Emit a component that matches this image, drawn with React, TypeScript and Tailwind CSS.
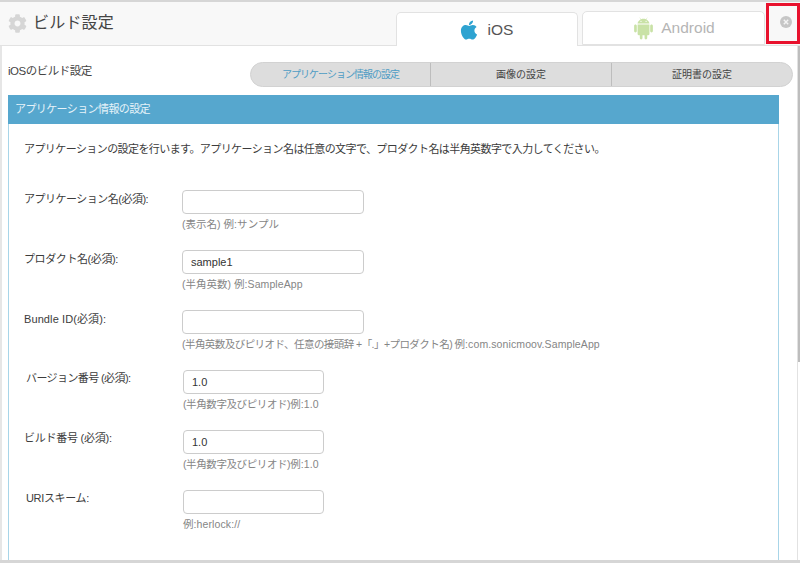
import { AiFillAndroid } from "react-icons/ai";
import { FaApple, FaCog } from "react-icons/fa";

type Field = {
  label: string;
  value?: string;
  hint: string;
  example: string;
  short?: boolean;
  labelClass: string;
  hintClass?: string;
};

const fields: Field[] = [
  {
    label: "アプリケーション名(必須):",
    hint: "(表示名) ",
    example: "例:サンプル",
    labelClass: "pt-[1px] tracking-[-0.5px]",
  },
  {
    label: "プロダクト名(必須):",
    value: "sample1",
    hint: "(半角英数) ",
    example: "例:SampleApp",
    labelClass: "pt-[1px] tracking-[-0.4px]",
  },
  {
    label: "Bundle ID(必須):",
    hint: "(半角英数及びピリオド、任意の接頭辞 +「.」+プロダクト名) ",
    example: "例:com.sonicmoov.SampleApp",
    labelClass: "pt-[1px] tracking-[0.1px]",
    hintClass: "tracking-[-0.55px]",
  },
  {
    label: "バージョン番号 (必須):",
    value: "1.0",
    hint: "(半角数字及びピリオド)",
    example: "例:1.0",
    short: true,
    labelClass: "pl-[2px] tracking-[-0.6px]",
    hintClass: "tracking-[-0.4px]",
  },
  {
    label: "ビルド番号 (必須):",
    value: "1.0",
    hint: "(半角数字及びピリオド)",
    example: "例:1.0",
    short: true,
    labelClass: "tracking-[-0.25px]",
    hintClass: "tracking-[-0.4px]",
  },
  {
    label: "URIスキーム:",
    hint: "",
    example: "例:herlock://",
    short: true,
    labelClass: "pl-[2px] tracking-[-0.35px]",
  },
];

function FieldRow({ field }: { field: Field }) {
  return (
    <div className="flex h-[60px]">
      <label className={`w-[158px] shrink-0 text-[11px] leading-[16px] whitespace-nowrap text-[#3c3c3c] ${field.labelClass}`}>
        {field.label}
      </label>
      <div className={field.short ? "pl-px" : ""}>
        <input
          readOnly
          value={field.value ?? ""}
          className={`block h-[24px] rounded-[4px] border border-[#cccccc] bg-white px-[8px] text-[11px] text-[#333333] outline-none ${
            field.short ? "w-[141px]" : "w-[182px]"
          }`}
        />
        <p className="mt-[3px] whitespace-nowrap text-[10.5px] leading-[14px] text-[#858585]">
          <span className={field.hintClass}>{field.hint}</span>
          <span className="tracking-[0.1px]">{field.example}</span>
        </p>
      </div>
    </div>
  );
}

export default function App() {
  return (
    <div
      className="flex h-[563px] w-[800px] flex-col overflow-hidden border-t-2 border-b-[3px] border-[#d6d6d6] bg-white"
      style={{ fontFamily: '"Liberation Sans", "Noto Sans CJK JP", sans-serif' }}
    >
      {/* header with platform tabs */}
      <header className="flex h-[44px] shrink-0 items-end border-b border-[#e2e2e2] bg-[#f8f8f8] pl-[8px]">
        <div className="flex h-full flex-1 items-center gap-[6px] pb-[1px]">
          <FaCog className="h-[19px] w-[19px] text-[#d6d6d6]" />
          <h1 className="text-[16px] font-normal tracking-[0.2px] text-[#444444]">ビルド設定</h1>
        </div>
        <div className="-mb-px flex h-[34px] w-[182px] items-center justify-center gap-[8px] rounded-t-[5px] border border-b-0 border-[#e2e2e2] bg-white pr-[3px]">
          <FaApple className="h-[22px] w-[22px] text-[#2ea3d1]" />
          <span className="text-[15.5px] text-[#555555]">iOS</span>
        </div>
        <div className="ml-[4px] flex h-[34px] w-[183px] items-center justify-center gap-[5px] rounded-t-[5px] border border-[#e2e2e2] bg-white pr-[1px]">
          <AiFillAndroid className="h-[25px] w-[25px] text-[#c9e2a6]" />
          <span className="text-[15.5px] text-[#b5b5b5]">Android</span>
        </div>
        <div className="mb-px ml-px flex h-[41px] w-[34px] shrink-0 items-start justify-center border-[3px] border-[#e8112d] pt-[10px]">
          <svg viewBox="0 0 12 12" className="ml-[6px] h-[12px] w-[12px]">
            <circle cx="6" cy="6" r="6" fill="#c6c6c6" />
            <path d="M3.8 3.8l4.4 4.4M8.2 3.8L3.8 8.2" stroke="#f4f4f4" strokeWidth="1.4" />
          </svg>
        </div>
      </header>

      <div className="flex min-h-0 flex-1 border-l-2 border-[#e6e6e6]">
        <main className="min-w-0 flex-1 pl-[6px]">
          {/* section title and step menu */}
          <div className="flex h-[49px] items-start pt-[16px]">
            <h2 className="w-[242px] shrink-0 pt-[1px] text-[11.5px] leading-[16px] tracking-[-0.5px] text-[#444444]">iOSのビルド設定</h2>
            <nav className="flex h-[25px] w-[543px] items-center rounded-full border border-[#d2d2d2] bg-[#dddddd] text-[10px] text-[#444444]">
              <span className="flex h-full w-[179px] items-center justify-center tracking-[-1px] text-[#4e9cc4]">アプリケーション情報の設定</span>
              <span className="flex h-full w-[181px] items-center justify-center border-l border-[#bdbdbd]">画像の設定</span>
              <span className="flex h-full flex-1 items-center justify-center border-l border-[#bdbdbd]">証明書の設定</span>
            </nav>
          </div>

          {/* application info panel */}
          <section className="h-[470px] w-[771px] border-x border-[#a8d5e8]">
            <div className="-mx-px flex h-[29px] items-center bg-[#56a7ce] pl-[7px] text-[11px] tracking-[-0.6px] text-[#e6f3f9]">
              アプリケーション情報の設定
            </div>
            <div className="pl-[15px] pt-[17px]">
              <p className="text-[11px] leading-[16px] tracking-[-0.58px] text-[#3c3c3c]">
                アプリケーションの設定を行います。アプリケーション名は任意の文字で、プロダクト名は半角英数字で入力してください。
              </p>
              <div className="mt-[33px]">
                {fields.map((field) => (
                  <FieldRow key={field.label} field={field} />
                ))}
              </div>
            </div>
          </section>
        </main>
        {/* page scrollbar */}
        <div className="w-[3px] shrink-0 border-l border-[#e2e2e2] bg-white">
          <div className="h-[316px] bg-[#bdbdbd]" />
        </div>
      </div>
    </div>
  );
}
